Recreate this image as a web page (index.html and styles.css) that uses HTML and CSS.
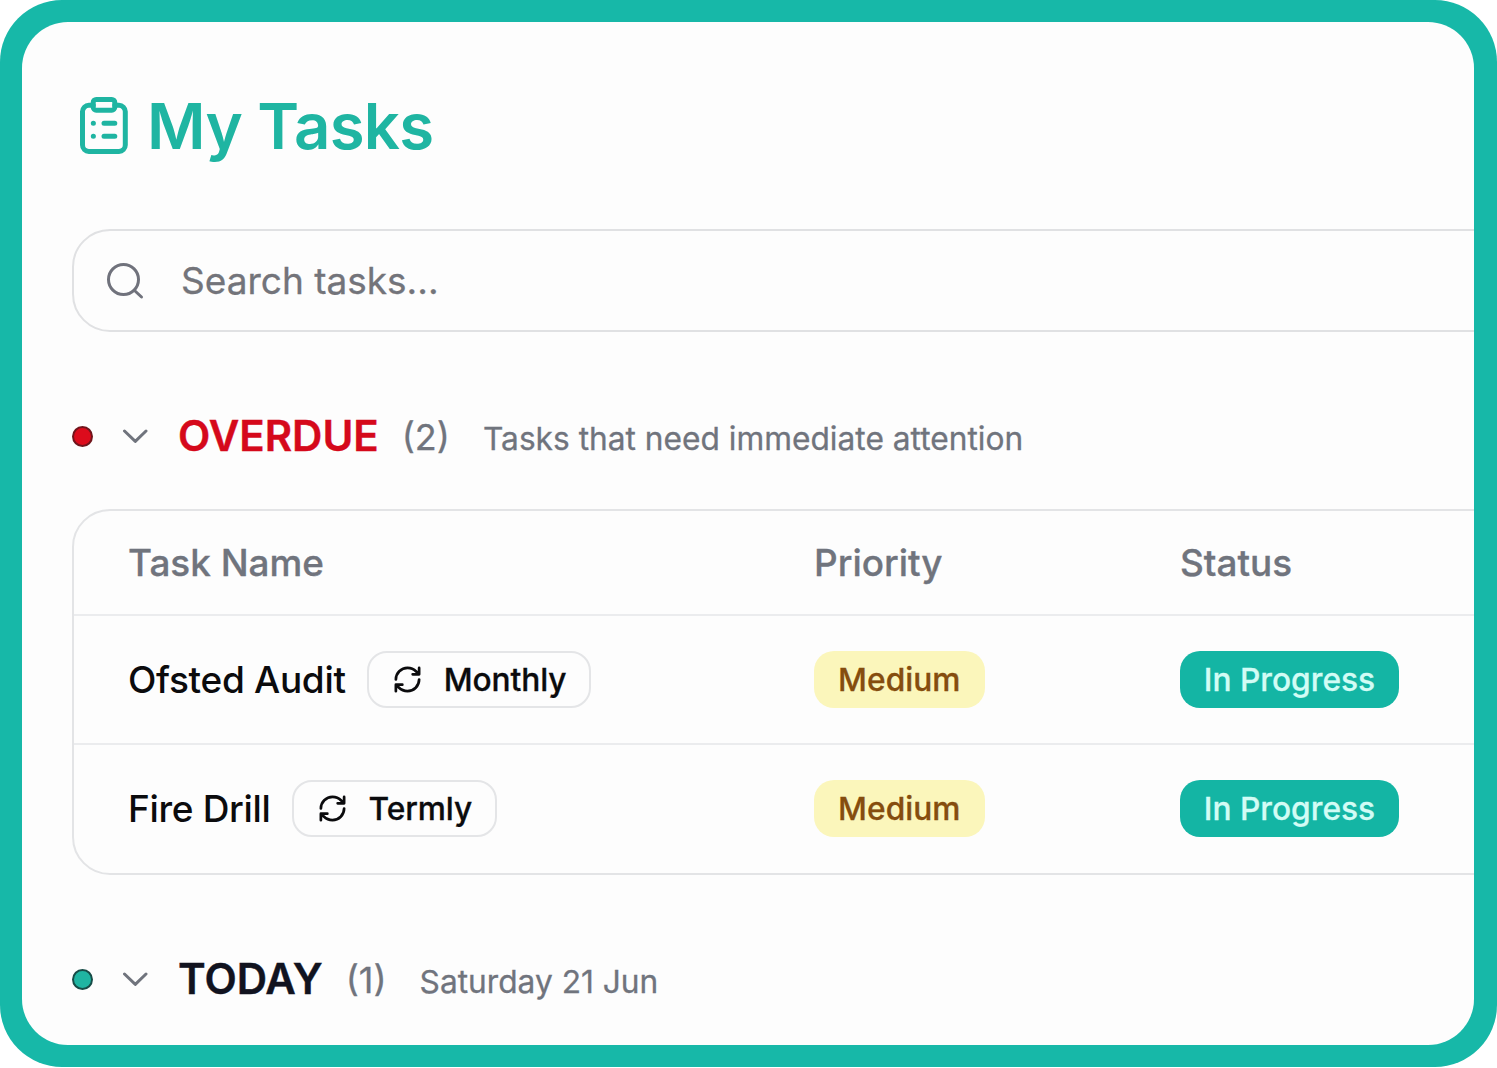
FILE: index.html
```html
<!DOCTYPE html>
<html lang="en">
<head>
<meta charset="utf-8">
<title>My Tasks</title>
<link rel="stylesheet" href="styles.css">
</head>
<body>
<div class="frame">
<main class="panel">
  <header class="title">
    <svg class="title-icon" viewBox="0 0 50 60" fill="none" stroke="currentColor" stroke-width="5" stroke-linecap="round" stroke-linejoin="round">
      <rect x="14.200" y="3.500" width="21.600" height="10.700" rx="3"/>
      <path d="M35.800 9.300H40a6.300 6.300 0 0 1 6.300 6.300v33.500a6.300 6.300 0 0 1-6.300 6.300H9.800a6.300 6.300 0 0 1-6.300-6.300V15.600a6.300 6.300 0 0 1 6.300-6.300h4.400M25 27.200h10.800M25 40.200h10.800M14.300 27.200h.1M14.300 40.200h.1"/>
    </svg>
    <h1>My Tasks</h1>
  </header>
  <div class="search">
    <svg class="search-icon" viewBox="0 0 40 40" fill="none" stroke="currentColor" stroke-width="3" stroke-linecap="round"><circle cx="18.500" cy="18.500" r="15"/><path d="M29.500 29.500l7 6.500"/></svg>
    <span>Search tasks...</span>
  </div>
  <section class="group-head">
    <i class="dot dot-red"></i>
    <svg class="chevron" viewBox="0 0 26 16" fill="none" stroke="currentColor" stroke-width="3" stroke-linecap="round" stroke-linejoin="round"><path d="M2.500 3L13.300 13.300 24 3"/></svg>
    <h2 class="overdue">OVERDUE</h2><span class="count">(2)</span><p class="note">Tasks that need immediate attention</p>
  </section>
  <section class="table">
    <div class="row head"><span>Task Name</span><span>Priority</span><span>Status</span></div>
    <div class="row">
      <div class="name"><span>Ofsted Audit</span><div class="repeat"><svg class="cycle" viewBox="0 0 24 24"><path d="M3 12a9 9 0 0 1 9-9 9.750 9.750 0 0 1 6.740 2.740L21 8M21 3v5h-5M21 12a9 9 0 0 1-9 9 9.750 9.750 0 0 1-6.740-2.740L3 16M8 16H3v5"/></svg><span>Monthly</span></div></div>
      <div><span class="badge medium">Medium</span></div><div><span class="badge progress">In Progress</span></div>
    </div>
    <div class="row">
      <div class="name"><span>Fire Drill</span><div class="repeat"><svg class="cycle" viewBox="0 0 24 24"><path d="M3 12a9 9 0 0 1 9-9 9.750 9.750 0 0 1 6.740 2.740L21 8M21 3v5h-5M21 12a9 9 0 0 1-9 9 9.750 9.750 0 0 1-6.740-2.740L3 16M8 16H3v5"/></svg><span>Termly</span></div></div>
      <div><span class="badge medium">Medium</span></div><div><span class="badge progress">In Progress</span></div>
    </div>
  </section>
  <section class="group-head">
    <i class="dot dot-green"></i>
    <svg class="chevron" viewBox="0 0 26 16" fill="none" stroke="currentColor" stroke-width="3" stroke-linecap="round" stroke-linejoin="round"><path d="M2.500 3L13.300 13.300 24 3"/></svg>
    <h2 class="today">TODAY</h2><span class="count">(1)</span><p class="note">Saturday 21 Jun</p>
  </section>
</main>
</div>
</body>
</html>
```
FILE: styles.css
```css
* { box-sizing: border-box; }
body { margin: 0; background: #fff; font-family: Inter, sans-serif; color: #0b0b0d; }
h1, h2, p { margin: 0; white-space: nowrap; }
span { white-space: nowrap; }
svg { display: block; flex: none; }
.frame { width: 1497px; height: 1067px; padding: 22px 23px 22px 22px; border-radius: 62px; background: #17b8a8; }
.panel { height: 100%; padding: 64px 0 0 50px; border-radius: 46px; background: #fdfdfd; overflow: hidden; }
.title { display: flex; align-items: center; height: 80px; padding-left: 7px; color: #1fb5a2; }
.title-icon { width: 50px; height: 60px; }
h1 { margin-left: 18px; font-size: 63.5px; line-height: 78px; font-weight: 600; letter-spacing: -0.7px; padding-bottom: 1px; }
.search { display: flex; align-items: center; width: 1500px; height: 103px; margin-top: 63px; padding-left: 31px; border: 2px solid #e0e1e3; border-radius: 38px; color: #73747a; font-size: 37px; }
.search span { padding-bottom: 1px; -webkit-text-stroke: 0.3px currentColor; }
.search-icon { width: 40px; height: 40px; margin-right: 36px; color: #70727c; }
.group-head { display: flex; align-items: center; height: 60px; margin-top: 74px; color: #70747d; }
.dot { width: 21px; height: 21px; border-radius: 50%; border: 2px solid #70151c; background: #dc0c1c; flex: none; }
.dot-green { background: #1fb5a2; border-color: #174c47; }
.chevron { width: 26px; height: 16px; margin-left: 29px; }
h2 { margin-left: 30px; font-size: 42px; line-height: 60px; font-weight: 600; -webkit-text-stroke: 0.4px currentColor; }
.overdue { color: #d5091b; }
.today { color: #11131f; }
.count { margin-left: 23px; padding-top: 2px; font-size: 36px; -webkit-text-stroke: 0.3px currentColor; }
.note { margin-left: 33px; padding-top: 5px; font-size: 31.7px; -webkit-text-stroke: 0.3px currentColor; }
.table { width: 1500px; height: 366px; margin-top: 43px; border: 2px solid #e3e4e6; border-radius: 38px; }
.row { display: grid; grid-template-columns: 686px 366px 1fr; align-items: center; height: 129px; padding-left: 54px; border-top: 2px solid #ebecee; font-size: 37px; font-weight: 500; }
.row.head { height: 103px; border: 0; color: #70747d; font-size: 36.9px; -webkit-text-stroke: 0.3px currentColor; }
.name { display: flex; align-items: center; letter-spacing: -0.32px; }
.repeat { display: flex; align-items: center; height: 57px; margin-left: 21.5px; padding: 0 22.5px; border: 2px solid #e4e5e7; border-radius: 20px; font-size: 31.7px; letter-spacing: -0.1px; }
.repeat span { padding-bottom: 1px; }
.cycle { width: 31px; height: 31px; margin-right: 21px; fill: none; stroke: currentColor; stroke-width: 2.1; stroke-linecap: round; stroke-linejoin: round; }
.badge { display: inline-flex; align-items: center; justify-content: center; height: 57px; padding-bottom: 1px; border-radius: 20px; font-size: 31.7px; vertical-align: middle; }
.repeat span, .badge { -webkit-text-stroke: 0.3px currentColor; }
.medium { width: 170.5px; background: #fbf6bb; color: #854d0e; }
.progress { width: 219px; background: #14b5a4; color: #d2fcf5; }
```
